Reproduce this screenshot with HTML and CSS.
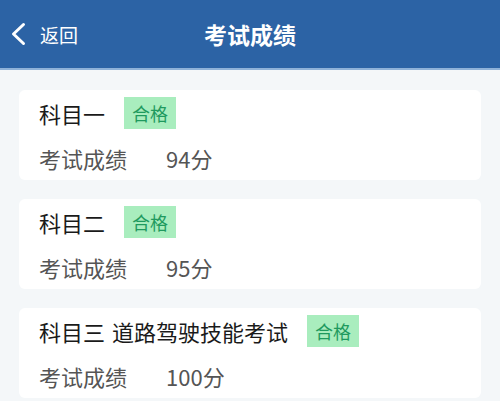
FILE: index.html
```html
<!DOCTYPE html>
<html lang="zh-CN">
<head>
<meta charset="UTF-8">
<meta name="viewport" content="width=device-width, initial-scale=1.0">
<title>考试成绩</title>
<link rel="stylesheet" href="styles.css">
</head>
<body>

<!-- Kopfzeile -->
<div class="header">
    <div class="back">
        <svg class="backIcon" width="18" height="24" viewBox="0 0 18 24">
            <path d="M13.5 2.5 L3.5 12 L13.5 21.5" fill="none" stroke="#fff" stroke-width="3" stroke-linecap="round" stroke-linejoin="round"/>
        </svg>
        <span>返回</span>
    </div>
    <div class="title">考试成绩</div>
</div>

<!-- Ergebnisliste -->
<div class="list">
    <div class="card">
        <div class="cardTitle">
            <span>科目一</span>
            <span class="badge">合格</span>
        </div>
        <div class="score">
            <span class="label">考试成绩</span>
            <span class="value">94分</span>
        </div>
    </div>

    <div class="card">
        <div class="cardTitle">
            <span>科目二</span>
            <span class="badge">合格</span>
        </div>
        <div class="score">
            <span class="label">考试成绩</span>
            <span class="value">95分</span>
        </div>
    </div>

    <div class="card">
        <div class="cardTitle">
            <span>科目三 道路驾驶技能考试</span>
            <span class="badge">合格</span>
        </div>
        <div class="score">
            <span class="label">考试成绩</span>
            <span class="value">100分</span>
        </div>
    </div>
</div>

</body>
</html>
```

FILE: styles.css
```css
/* Allgemeine Stile */
body {
    margin: 0;
    padding: 0;
    background-color: #f4f7f9;
    font-family: "Noto Sans CJK SC", "Noto Sans", sans-serif;
}

/* Kopfzeile */
.header {
    position: relative;
    height: 70px;
    background-color: #2c63a5;
    border-bottom: 2px solid #8fb2d8;
    box-sizing: border-box;
    display: flex;
    align-items: center;
    justify-content: center;
}

.back {
    position: absolute;
    left: 10px;
    top: 0;
    bottom: 0;
    display: flex;
    align-items: center;
    color: #fff;
    font-size: 19px;
}

.backIcon {
    margin-right: 12px;
}

.title {
    color: #fff;
    font-size: 23px;
    font-weight: bold;
}

/* Karten */
.list {
    padding: 20px 19px 0 19px;
    display: flex;
    flex-direction: column;
    gap: 19px;
}

.card {
    background-color: #fff;
    border-radius: 6px;
    height: 90px;
    padding: 7px 20px 0 20px;
    box-sizing: border-box;
}

.cardTitle {
    display: flex;
    align-items: center;
    gap: 19px;
    font-size: 22px;
    word-spacing: 2px;
    color: #1a1a1a;
    height: 32px;
}

.badge {
    background-color: #a9edbe;
    color: #1f9a5e;
    font-size: 18px;
    padding: 0 8px;
    height: 32px;
    line-height: 32px;
}

.score {
    display: flex;
    align-items: center;
    margin-top: 13px;
    font-size: 22px;
    color: #555;
}

.value {
    margin-left: 39px;
}
```
